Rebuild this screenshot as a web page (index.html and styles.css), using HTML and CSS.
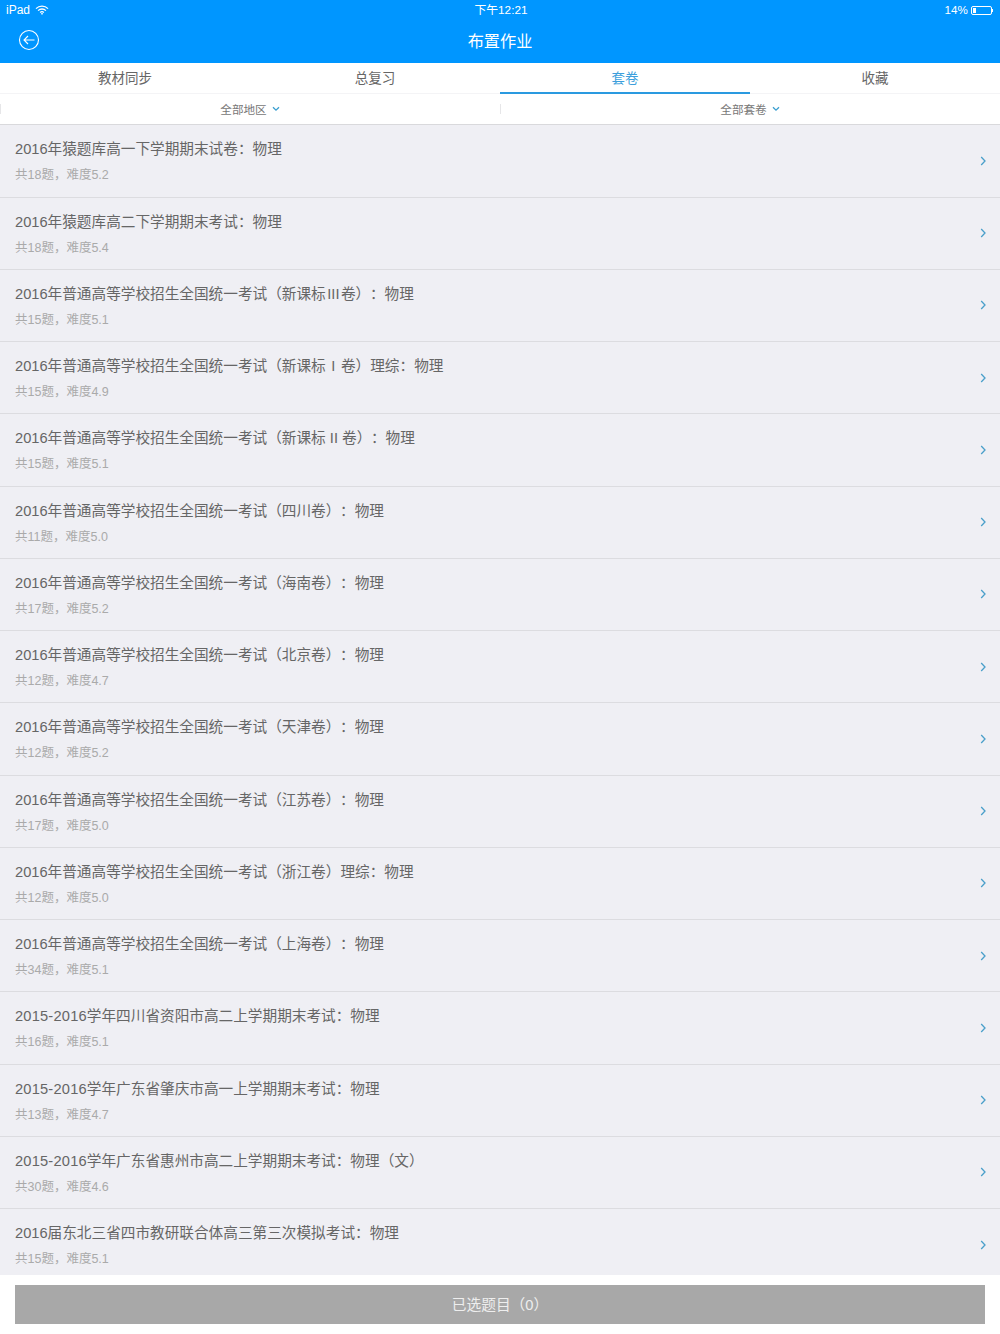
FILE: index.html
```html
<!DOCTYPE html>
<html lang="zh-CN">
<head>
  <meta charset="UTF-8">
  <title>布置作业</title>
  <link rel="stylesheet" href="styles.css">
</head>
<body>
  <div class="page">
    <div class="top">
      <div class="status">
        <div class="status-left">
          <span>iPad</span>
          <svg class="wifi" width="14" height="10" viewBox="0 0 14 10"><path d="M1 3.6a8.6 8.6 0 0 1 12 0M3.1 5.6a5.6 5.6 0 0 1 7.8 0M5.1 7.5a2.8 2.8 0 0 1 3.8 0" fill="none" stroke="#fff" stroke-width="1.3"/><path d="M7 10 5.9 8.6a1.6 1.6 0 0 1 2.2 0z" fill="#fff"/></svg>
        </div>
        <div class="status-time">下午12:21</div>
        <div class="status-right">
          <span class="percent">14%</span>
          <div class="battery"><div class="battery-fill"></div></div>
          <div class="battery-tip"></div>
        </div>
      </div>
      <div class="navbar">
        <svg class="back" width="22" height="22" viewBox="0 0 22 22"><circle cx="11" cy="11" r="9.5" fill="none" stroke="#fff" stroke-width="1.1"/><path d="M16.5 11H6M10 7l-4 4 4 4" fill="none" stroke="#fff" stroke-width="1.1"/></svg>
        <h1>布置作业</h1>
      </div>
    </div>

    <div class="tabs">
      <div class="tab">教材同步</div>
      <div class="tab">总复习</div>
      <div class="tab active">套卷</div>
      <div class="tab">收藏</div>
    </div>

    <div class="filters">
      <div class="filter">全部地区<svg width="8" height="6" viewBox="0 0 8 6"><path d="M1 1.2 4 4.2 7 1.2" fill="none" stroke="#3b9fd0" stroke-width="1.3"/></svg></div>
      <div class="filter">全部套卷<svg width="8" height="6" viewBox="0 0 8 6"><path d="M1 1.2 4 4.2 7 1.2" fill="none" stroke="#3b9fd0" stroke-width="1.3"/></svg></div>
    </div>

    <div class="list">
      <div class="row"><div class="info"><div class="name">2016年猿题库高一下学期期末试卷：物理</div><div class="meta">共18题，难度5.2</div></div><svg class="arrow" width="6" height="10" viewBox="0 0 6 10"><path d="M1.2 1 5 5 1.2 9" fill="none" stroke="#4a9fca" stroke-width="1.3"/></svg></div>
      <div class="row"><div class="info"><div class="name">2016年猿题库高二下学期期末考试：物理</div><div class="meta">共18题，难度5.4</div></div><svg class="arrow" width="6" height="10" viewBox="0 0 6 10"><path d="M1.2 1 5 5 1.2 9" fill="none" stroke="#4a9fca" stroke-width="1.3"/></svg></div>
      <div class="row"><div class="info"><div class="name">2016年普通高等学校招生全国统一考试（新课标<span class="roman">III</span>卷）<span class="colon">：</span>物理</div><div class="meta">共15题，难度5.1</div></div><svg class="arrow" width="6" height="10" viewBox="0 0 6 10"><path d="M1.2 1 5 5 1.2 9" fill="none" stroke="#4a9fca" stroke-width="1.3"/></svg></div>
      <div class="row"><div class="info"><div class="name">2016年普通高等学校招生全国统一考试（新课标<span class="roman">&nbsp;I&nbsp;</span>卷）理综：物理</div><div class="meta">共15题，难度4.9</div></div><svg class="arrow" width="6" height="10" viewBox="0 0 6 10"><path d="M1.2 1 5 5 1.2 9" fill="none" stroke="#4a9fca" stroke-width="1.3"/></svg></div>
      <div class="row"><div class="info"><div class="name">2016年普通高等学校招生全国统一考试（新课标 II 卷）<span class="colon">：</span>物理</div><div class="meta">共15题，难度5.1</div></div><svg class="arrow" width="6" height="10" viewBox="0 0 6 10"><path d="M1.2 1 5 5 1.2 9" fill="none" stroke="#4a9fca" stroke-width="1.3"/></svg></div>
      <div class="row"><div class="info"><div class="name">2016年普通高等学校招生全国统一考试（四川卷）<span class="colon">：</span>物理</div><div class="meta">共11题，难度5.0</div></div><svg class="arrow" width="6" height="10" viewBox="0 0 6 10"><path d="M1.2 1 5 5 1.2 9" fill="none" stroke="#4a9fca" stroke-width="1.3"/></svg></div>
      <div class="row"><div class="info"><div class="name">2016年普通高等学校招生全国统一考试（海南卷）<span class="colon">：</span>物理</div><div class="meta">共17题，难度5.2</div></div><svg class="arrow" width="6" height="10" viewBox="0 0 6 10"><path d="M1.2 1 5 5 1.2 9" fill="none" stroke="#4a9fca" stroke-width="1.3"/></svg></div>
      <div class="row"><div class="info"><div class="name">2016年普通高等学校招生全国统一考试（北京卷）<span class="colon">：</span>物理</div><div class="meta">共12题，难度4.7</div></div><svg class="arrow" width="6" height="10" viewBox="0 0 6 10"><path d="M1.2 1 5 5 1.2 9" fill="none" stroke="#4a9fca" stroke-width="1.3"/></svg></div>
      <div class="row"><div class="info"><div class="name">2016年普通高等学校招生全国统一考试（天津卷）<span class="colon">：</span>物理</div><div class="meta">共12题，难度5.2</div></div><svg class="arrow" width="6" height="10" viewBox="0 0 6 10"><path d="M1.2 1 5 5 1.2 9" fill="none" stroke="#4a9fca" stroke-width="1.3"/></svg></div>
      <div class="row"><div class="info"><div class="name">2016年普通高等学校招生全国统一考试（江苏卷）<span class="colon">：</span>物理</div><div class="meta">共17题，难度5.0</div></div><svg class="arrow" width="6" height="10" viewBox="0 0 6 10"><path d="M1.2 1 5 5 1.2 9" fill="none" stroke="#4a9fca" stroke-width="1.3"/></svg></div>
      <div class="row"><div class="info"><div class="name">2016年普通高等学校招生全国统一考试（浙江卷）理综：物理</div><div class="meta">共12题，难度5.0</div></div><svg class="arrow" width="6" height="10" viewBox="0 0 6 10"><path d="M1.2 1 5 5 1.2 9" fill="none" stroke="#4a9fca" stroke-width="1.3"/></svg></div>
      <div class="row"><div class="info"><div class="name">2016年普通高等学校招生全国统一考试（上海卷）<span class="colon">：</span>物理</div><div class="meta">共34题，难度5.1</div></div><svg class="arrow" width="6" height="10" viewBox="0 0 6 10"><path d="M1.2 1 5 5 1.2 9" fill="none" stroke="#4a9fca" stroke-width="1.3"/></svg></div>
      <div class="row"><div class="info"><div class="name"><span class="years">2015-2016</span>学年四川省资阳市高二上学期期末考试：物理</div><div class="meta">共16题，难度5.1</div></div><svg class="arrow" width="6" height="10" viewBox="0 0 6 10"><path d="M1.2 1 5 5 1.2 9" fill="none" stroke="#4a9fca" stroke-width="1.3"/></svg></div>
      <div class="row"><div class="info"><div class="name"><span class="years">2015-2016</span>学年广东省肇庆市高一上学期期末考试：物理</div><div class="meta">共13题，难度4.7</div></div><svg class="arrow" width="6" height="10" viewBox="0 0 6 10"><path d="M1.2 1 5 5 1.2 9" fill="none" stroke="#4a9fca" stroke-width="1.3"/></svg></div>
      <div class="row"><div class="info"><div class="name"><span class="years">2015-2016</span>学年广东省惠州市高二上学期期末考试：物理（文）</div><div class="meta">共30题，难度4.6</div></div><svg class="arrow" width="6" height="10" viewBox="0 0 6 10"><path d="M1.2 1 5 5 1.2 9" fill="none" stroke="#4a9fca" stroke-width="1.3"/></svg></div>
      <div class="row"><div class="info"><div class="name">2016届东北三省四市教研联合体高三第三次模拟考试：物理</div><div class="meta">共15题，难度5.1</div></div><svg class="arrow" width="6" height="10" viewBox="0 0 6 10"><path d="M1.2 1 5 5 1.2 9" fill="none" stroke="#4a9fca" stroke-width="1.3"/></svg></div>
    </div>

    <div class="footer">
      <div class="selected-btn">已选题目（0）</div>
    </div>
  </div>
</body>
</html>
```

FILE: styles.css
```css
*{box-sizing:border-box}
body{margin:0;background:#fff;font-family:"Liberation Sans","Noto Sans CJK SC",sans-serif;color:#666}
.page{width:1000px;height:1334px;display:flex;flex-direction:column;overflow:hidden}

.top{background:#0096ff;color:#fff;height:63px;flex-shrink:0}
.status{height:20px;padding:0 6px;display:flex;align-items:center;justify-content:space-between;font-size:12px;position:relative}
.status-left{display:flex;align-items:center;gap:5px}
.status-time{position:absolute;left:2px;right:0;top:2px;text-align:center;line-height:16px;font-size:11.8px}
.status-right{display:flex;align-items:center;font-size:11.6px;letter-spacing:.1px}
.percent{padding-bottom:2px}
.battery{width:21px;height:9px;border:1px solid #fff;border-radius:2px;margin-left:3px;padding:1px}
.battery-fill{width:3px;height:100%;background:#fff}
.battery-tip{width:1px;height:3px;background:#fff;margin-right:1px}
.navbar{height:43px;display:flex;align-items:center;justify-content:center;position:relative}
.navbar h1{margin:0 0 4px;font-size:16.2px;font-weight:400}
.back{position:absolute;left:18px;top:9px}

.tabs{height:31px;display:flex;background:#fff;flex-shrink:0;border-bottom:1px solid #f4f4f6}
.tab{flex:1;text-align:center;font-size:13.5px;line-height:32px;color:#666}
.tab.active{color:#3d9fdc;border-bottom:2px solid #2a9ae0;height:31px}

.filters{height:31px;display:flex;background:#fff;flex-shrink:0;border-bottom:1px solid #d9d9dc}
.filter{flex:1;display:flex;align-items:center;justify-content:center;gap:5px;font-size:11.6px;color:#777;background:linear-gradient(#e6e6e8,#e6e6e8) left center/1px 10px no-repeat}

.list{flex:1;overflow:hidden;background:#efeff4;padding-top:.25px}
.row{height:72.25px;padding:0 14px 0 15px;display:flex;align-items:center;justify-content:space-between;border-bottom:1px solid #dcdce0}
.info{padding-top:4px}
.name{font-size:14.65px;line-height:20px;color:#666;margin-top:-3px}
.colon{margin-left:7px}
.roman{margin:0 1.5px}
.years{letter-spacing:.2px}
.meta{font-size:12.5px;line-height:16px;color:#aaa;margin-top:8px}

.footer{height:59px;flex-shrink:0;background:#fff;padding:10px 15px}
.selected-btn{height:39px;background:#a8a8a8;color:#eee;text-align:center;line-height:40px;font-size:14.7px}
```
